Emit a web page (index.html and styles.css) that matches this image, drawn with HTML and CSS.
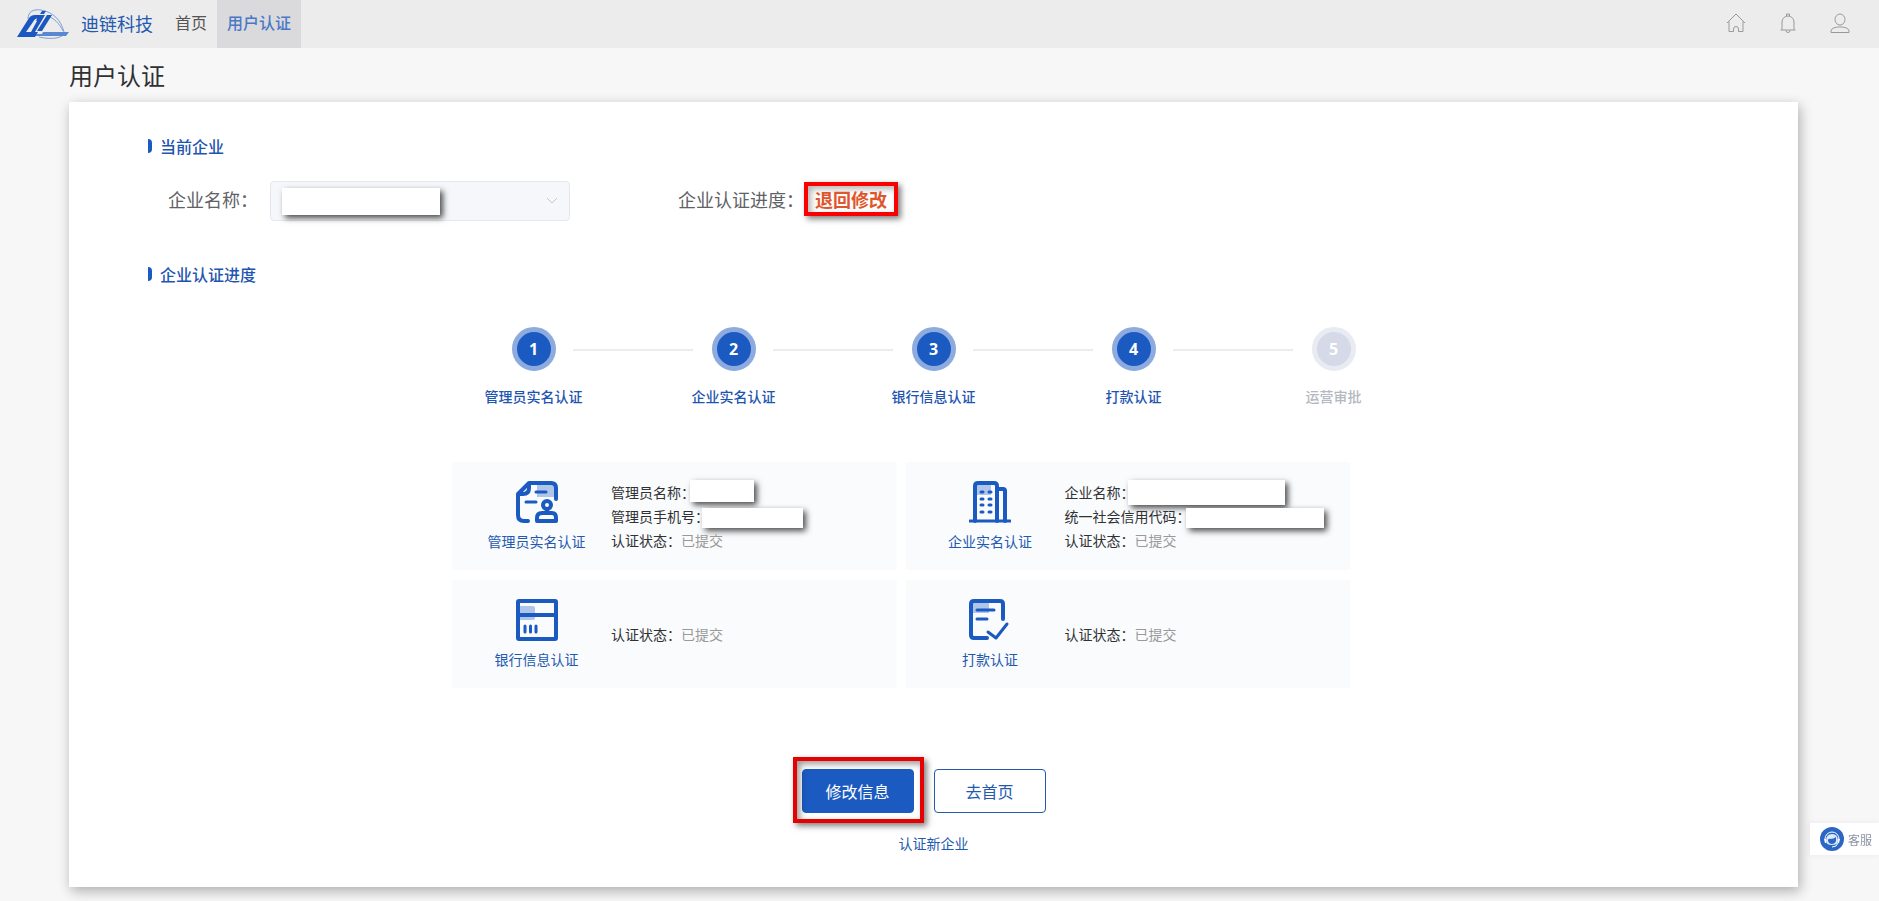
FILE: index.html
```html
<!DOCTYPE html>
<html lang="zh-CN">
<head>
    <meta charset="UTF-8">
    <meta name="viewport" content="width=device-width, initial-scale=1.0">
    <title>用户认证</title>
    <link rel="stylesheet" href="styles.css">
</head>
<body>

<!-- Top bar -->
<header class="topbar">
    <a class="brand" href="#">
        <svg class="logo" viewBox="0 0 52 30" width="52" height="30">
            <path d="M11 10C11 2 17 0 24 1C36 3 44 11 47 23M30 7C37 9 42 14 46 22M22 28C35 31 46 29 47 24" fill="none" stroke="#7f9fd6" stroke-width="1"/>
            <path d="M26 23H52L49 27H18L20 25H25Z" fill="#5b86d0"/>
            <path d="M0 28 12 9Q14 6 18 6H27L25 9H22Q18 9 16 13L9 23H21L18 28Z" fill="#1b57c0"/>
            <path d="M20 6H28L18 23H12L20 10Z" fill="#1b57c0"/>
            <path d="M18 11 11 23H14L20 12Z" fill="#ececec"/>
            <path d="M25 2H29L27 5H23ZM30 6H35L25 22H20Z" fill="#1b57c0"/>
        </svg>
        <span>迪链科技</span>
    </a>
    <nav class="menu">
        <a href="#">首页</a>
        <a class="active" href="#">用户认证</a>
    </nav>
    <div class="tools">
        <a href="#" aria-label="首页">
            <svg viewBox="0 0 20 20" width="20" height="20">
                <path d="M1 10 10 1 19 10M3 8.500V18.500H7.500V16A2.500 2.500 0 0 1 12.500 16V18.500H17V8.500"/>
            </svg>
        </a>
        <a href="#" aria-label="消息">
            <svg viewBox="0 0 20 20" width="20" height="20">
                <path d="M2.500 17H17.500M4 17V9A6 6 0 0 1 16 9V17M8.500 3V1H11.500V3M8 17.500A2 2 0 0 0 12 17.500"/>
            </svg>
        </a>
        <a href="#" aria-label="我的">
            <svg viewBox="0 0 20 20" width="20" height="20">
                <ellipse cx="10" cy="6.500" rx="5" ry="5.500"/>
                <path d="M1 19.500V18C1 12.500 19 12.500 19 18V19.500Z"/>
            </svg>
        </a>
    </div>
</header>

<main class="page">
    <h1>用户认证</h1>

    <div class="panel">
        <!-- Current company -->
        <h2 class="section-title">当前企业</h2>
        <div class="company">
            <label for="company">企业名称：</label>
            <div class="select-box">
                <select id="company" disabled>
                    <option></option>
                </select>
                <svg class="arrow" viewBox="0 0 12 12" width="12" height="12">
                    <path d="M1 3 6 8 11 3"/>
                </svg>
                <span class="mask mask-company"></span>
            </div>
            <div class="status">企业认证进度：<strong>退回修改</strong></div>
        </div>

        <!-- Progress -->
        <h2 class="section-title progress-title">企业认证进度</h2>
        <div class="steps">
            <div class="step"><span class="num">1</span><span class="name">管理员实名认证</span></div>
            <div class="line"></div>
            <div class="step"><span class="num">2</span><span class="name">企业实名认证</span></div>
            <div class="line"></div>
            <div class="step"><span class="num">3</span><span class="name">银行信息认证</span></div>
            <div class="line"></div>
            <div class="step"><span class="num">4</span><span class="name">打款认证</span></div>
            <div class="line"></div>
            <div class="step wait"><span class="num">5</span><span class="name">运营审批</span></div>
        </div>

        <!-- Detail cards -->
        <div class="cards">
            <div class="card">
                <div class="card-icon">
                    <svg viewBox="0 0 42 42" width="42" height="42">
                        <path class="tint" d="M21 4H38V16H21Z"/>
                        <path d="M12 40H8Q2 40 2 34V13L13 2H35Q40 2 40 7V18M2 13H7Q13 13 13 7V2"/>
                        <path class="thin" d="M20 11H30M10 21H20"/>
                        <circle cx="31" cy="24" r="4"/>
                        <path d="M31 28V32M26 32H36Q40 32 40 37V40H21V37Q21 32 26 32Z"/>
                    </svg>
                    <span>管理员实名认证</span>
                </div>
                <ul>
                    <li>管理员名称：<span class="mask mask-admin"></span></li>
                    <li>管理员手机号：<span class="mask mask-phone"></span></li>
                    <li>认证状态：<em>已提交</em></li>
                </ul>
            </div>
            <div class="card">
                <div class="card-icon">
                    <svg viewBox="0 0 42 42" width="42" height="42">
                        <path class="tint" d="M7 4H22V14H7Z"/>
                        <path class="thin" d="M1 40H41"/>
                        <path d="M6 40V5Q6 2 9 2H25Q28 2 28 5V40M28 8H34Q36 8 36 10V40"/>
                        <path class="thin" d="M12 11H14M20 11H22M12 18H14M20 18H22M12 24H14M20 24H22M12 31H14M20 31H22"/>
                    </svg>
                    <span>企业实名认证</span>
                </div>
                <ul>
                    <li>企业名称：<span class="mask mask-name"></span></li>
                    <li>统一社会信用代码：<span class="mask mask-code"></span></li>
                    <li>认证状态：<em>已提交</em></li>
                </ul>
            </div>
            <div class="card">
                <div class="card-icon">
                    <svg viewBox="0 0 42 42" width="42" height="42">
                        <path class="tint" d="M4 7H17Q19 7 19 9V19Q19 21 17 21H4Z"/>
                        <rect x="2" y="2" width="38" height="38" rx="1"/>
                        <path d="M2 16H40"/>
                        <path class="thin" d="M9 27V33M14.500 27V33M20 27V33"/>
                    </svg>
                    <span>银行信息认证</span>
                </div>
                <ul>
                    <li>认证状态：<em>已提交</em></li>
                </ul>
            </div>
            <div class="card">
                <div class="card-icon">
                    <svg viewBox="0 0 42 42" width="42" height="42">
                        <path class="tint" d="M4 4H20V14H4Z"/>
                        <path d="M18 39H5Q2 39 2 36V5Q2 2 5 2H31Q34 2 34 5V20"/>
                        <path class="thin" d="M8 11H25M8 20H18M19 33 27 39 38 25"/>
                    </svg>
                    <span>打款认证</span>
                </div>
                <ul>
                    <li>认证状态：<em>已提交</em></li>
                </ul>
            </div>
        </div>

        <!-- Actions -->
        <div class="actions">
            <div class="marked"><button type="button" class="btn primary">修改信息</button></div>
            <button type="button" class="btn">去首页</button>
        </div>
        <a class="new-company" href="#">认证新企业</a>
    </div>
</main>

<!-- Floating customer service entry -->
<a class="service" href="#">
    <svg viewBox="0 0 24 24" width="24" height="24">
        <circle cx="12" cy="12" r="12" fill="#2c66c4"/>
        <path d="M5 12A7 7 0 0 1 19 12" fill="none" stroke="#fff" stroke-width="1"/>
        <path d="M6 14Q6 7 12 7T18 14Q18 18 12 18T6 14Z" fill="#dce8fb"/>
        <path d="M8 14Q8 11 10 12Q14 12 16 10V14Q15 17 12 17T8 14Z" fill="#2c66c4"/>
        <path d="M12 20Q17 20 18 16" fill="none" stroke="#fff"/>
        <path d="M4 12H6V16H5ZM18 12H20L19 16H18Z" fill="#fff"/>
    </svg>
    <span>客服</span>
</a>

</body>
</html>
```
FILE: styles.css
```css
* {
    box-sizing: border-box;
}

body {
    margin: 0;
    font-family: "Noto Sans CJK SC", sans-serif;
    font-size: 14px;
    color: #303133;
    background-color: #f7f7f7;
}

a {
    color: #2459b0;
    text-decoration: none;
}

/* Top bar */
.topbar {
    display: flex;
    height: 48px;
    padding: 0 29px 0 17px;
    background-color: #ececec;
}

.brand {
    display: flex;
    align-items: center;
    gap: 12px;
    padding-right: 12px;
    font-size: 18px;
    line-height: 46px;
}

.brand span {
    align-self: flex-start;
}

.menu {
    display: flex;
}

.menu a {
    padding: 0 10px;
    font-size: 16px;
    line-height: 45px;
    color: #555;
}

.menu .active {
    color: #4a78c8;
    font-weight: 500;
    background-color: #dadadc;
}

.tools {
    display: flex;
    align-items: center;
    gap: 32px;
    height: 46px;
    margin-left: auto;
}

.tools svg {
    display: block;
    fill: none;
    stroke: #999;
    stroke-linejoin: round;
}

/* Page */
.page {
    padding: 0 81px 14px 69px;
}

h1 {
    margin: 0;
    font-size: 24px;
    font-weight: 400;
    line-height: 54px;
}

.panel {
    padding: 32px 79px 34px;
    background-color: #fff;
    box-shadow: 2px 4px 12px rgba(0, 0, 0, 0.3);
}

.section-title {
    display: flex;
    align-items: center;
    gap: 8px;
    margin: 0;
    font-size: 16px;
    font-weight: 500;
    line-height: 24px;
    color: #1f55b0;
}

.section-title::before {
    content: "";
    width: 4px;
    height: 14px;
    border-radius: 0 4px 4px 0;
    background-color: #1b5ac0;
}

.progress-title {
    margin-top: 41px;
}

/* Company row */
.company {
    display: flex;
    margin-top: 23px;
    padding-left: 20px;
    font-size: 18px;
    line-height: 36px;
    color: #606266;
}

.company label {
    width: 102px;
}

.select-box {
    position: relative;
    width: 300px;
    margin-right: 108px;
}

.select-box select {
    display: block;
    width: 100%;
    height: 40px;
    appearance: none;
    border: 1px solid #e4e7ed;
    border-radius: 4px;
    background-color: #f5f7fa;
    opacity: 1;
}

.arrow {
    position: absolute;
    top: 14px;
    right: 12px;
    fill: none;
    stroke: #c0c4cc;
}

.status {
    display: flex;
    align-items: flex-start;
}

.status strong {
    margin-top: 1px;
    padding: 0 7px;
    border: 4px solid #fa0000;
    font-weight: 700;
    line-height: 26px;
    color: #e0562c;
    box-shadow: 3px 3px 6px rgba(0, 0, 0, 0.5), inset 3px 3px 6px rgba(0, 0, 0, 0.3);
}

/* White blocks that hide private values */
.mask {
    position: absolute;
    background-color: #fff;
    box-shadow: 3px 3px 6px rgba(0, 0, 0, 0.7);
}

.mask-company {
    left: 12px;
    top: 7px;
    width: 158px;
    height: 27px;
}

.mask-admin {
    left: 79px;
    top: 0;
    width: 64px;
    height: 22px;
}

.mask-phone {
    left: 91px;
    top: 4px;
    width: 101px;
    height: 20px;
}

.mask-name {
    left: 63px;
    top: 0;
    width: 157px;
    height: 25px;
}

.mask-code {
    left: 121px;
    top: 4px;
    width: 138px;
    height: 20px;
}

/* Steps */
.steps {
    display: flex;
    justify-content: center;
    margin-top: 41px;
}

.step {
    display: flex;
    flex-direction: column;
    align-items: center;
    gap: 15px;
    width: 78px;
    color: #1f55b0;
}

.num {
    width: 44px;
    height: 44px;
    border: 5px solid #8dabdf;
    border-radius: 50%;
    background-color: #1b5ac0;
    font-family: "Open Sans", sans-serif;
    font-size: 16px;
    font-weight: 700;
    line-height: 34px;
    text-align: center;
    color: #fff;
}

.name {
    font-weight: 500;
    line-height: 20px;
    white-space: nowrap;
}

.wait {
    color: #b4b8c0;
}

.wait .num {
    border-color: #e9ebf3;
    background-color: #d5d9e8;
}

.line {
    width: 120px;
    height: 2px;
    margin: 22px 2px 0 0;
    background-color: #ebecee;
}

/* Cards */
.cards {
    display: grid;
    grid-template-columns: 1fr 1fr;
    gap: 10px 9px;
    max-width: 963px;
    margin: 56px auto 0;
    padding-right: 65px;
}

.card {
    display: flex;
    align-items: center;
    min-height: 108px;
    background-color: #fafbfd;
}

.card-icon {
    display: flex;
    flex-direction: column;
    align-items: center;
    gap: 8px;
    width: 169px;
    line-height: 20px;
    color: #2459b0;
}

.card-icon svg {
    fill: none;
    stroke: #1b5ac0;
    stroke-width: 4;
    stroke-linecap: round;
    stroke-linejoin: round;
}

.card-icon .thin {
    stroke-width: 3;
}

.card-icon .tint {
    fill: #b0c5ea;
    stroke: none;
}

.card ul {
    margin: 0 0 0 -10px;
    padding: 0;
    list-style: none;
    line-height: 24px;
}

.card li {
    position: relative;
}

.card em {
    font-style: normal;
    color: #999;
}

/* Buttons */
.actions {
    display: flex;
    justify-content: center;
    margin-top: 81px;
}

.btn {
    width: 112px;
    height: 44px;
    margin-right: 20px;
    padding: 0;
    border: 1px solid #2459b0;
    border-radius: 4px;
    background-color: #fff;
    font-family: inherit;
    font-size: 16px;
    color: #2459b0;
    cursor: pointer;
}

.primary {
    border-color: #1b5ac0;
    background-color: #1b5ac0;
    color: #fff;
}

.marked {
    position: relative;
}

.marked::after {
    content: "";
    position: absolute;
    inset: -12px 10px -10px -9px;
    border: 4px solid #e60000;
    box-shadow: 3px 3px 6px rgba(0, 0, 0, 0.5), inset 3px 3px 6px rgba(0, 0, 0, 0.4);
    pointer-events: none;
}

.new-company {
    display: block;
    width: fit-content;
    margin: 20px auto 0;
    line-height: 20px;
}

/* Customer service */
.service {
    position: fixed;
    right: 0;
    bottom: 46px;
    display: flex;
    align-items: center;
    gap: 4px;
    height: 32px;
    padding: 0 7px 0 10px;
    background-color: #fff;
    box-shadow: 0 0 6px rgba(0, 0, 0, 0.06);
    font-size: 12px;
    color: #8a93a5;
}
```
